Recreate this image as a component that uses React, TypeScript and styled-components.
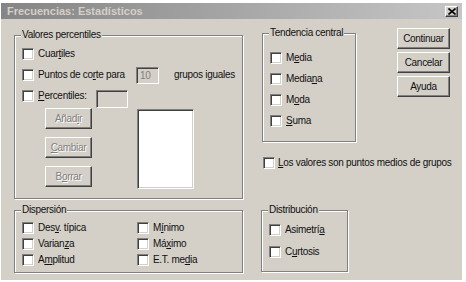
import styled, { createGlobalStyle } from 'styled-components';

const GlobalStyle = createGlobalStyle`
  html, body {
    margin: 0;
    padding: 0;
    background: #fff;
  }
  body {
    font-family: 'Liberation Sans', Arial, sans-serif;
  }
`;

const Window = styled.div`
  margin: 3px 0 0 1px;
  width: 461px;
  height: 277px;
  background: #d4d0c8;
  display: flex;
  flex-direction: column;
  font-size: 10px;
  line-height: 12px;
  letter-spacing: -0.3px;
  color: #111;
`;

const TitleBar = styled.div`
  flex: none;
  height: 16px;
  display: flex;
  align-items: center;
  justify-content: space-between;
  padding: 0 4px 0 6px;
  background: linear-gradient(to right, #858585, #c6c6c6);
`;

const Title = styled.span`
  font-size: 11px;
  font-weight: bold;
  letter-spacing: 0;
  color: #d4d0c8;
`;

const CloseButton = styled.div`
  box-sizing: border-box;
  width: 13px;
  height: 11px;
  display: flex;
  align-items: center;
  justify-content: center;
  background: #d4d0c8;
  border: 1px solid;
  border-color: #fff #404040 #404040 #fff;
  box-shadow: inset -1px -1px 0 #808080;
`;

const Body = styled.div`
  display: grid;
  grid-template-columns: 229px 1fr;
  column-gap: 19px;
  row-gap: 11px;
  padding-left: 13px;
`;

const Column = styled.div<{ $top?: number }>`
  display: flex;
  flex-direction: column;
  align-items: flex-start;
  margin-top: ${(p) => p.$top ?? 0}px;
`;

const GroupBox = styled.div<{ $w: number; $h: number; $top?: number; $left?: number }>`
  box-sizing: border-box;
  width: ${(p) => p.$w}px;
  height: ${(p) => p.$h}px;
  margin-top: ${(p) => p.$top ?? 0}px;
  margin-left: ${(p) => p.$left ?? 0}px;
  border: 1px solid #808080;
  box-shadow: 1px 1px 0 #fff, inset 1px 1px 0 #fff;
  padding: 0 6px;
  display: flex;
  flex-direction: column;
  align-items: flex-start;
`;

const Caption = styled.div`
  height: 12px;
  margin-top: -7px;
  padding: 0 1px;
  background: #d4d0c8;
`;

const CheckRow = styled.div<{ $top?: number; $h?: number; $gap?: number; $align?: string }>`
  display: flex;
  align-items: ${(p) => p.$align ?? 'center'};
  gap: ${(p) => p.$gap ?? 4}px;
  height: ${(p) => p.$h ?? 16}px;
  margin-top: ${(p) => p.$top ?? 0}px;
  padding-left: 1px;
  white-space: nowrap;
`;

const CheckBox = styled.span`
  box-sizing: border-box;
  flex: none;
  width: 12px;
  height: 12px;
  background: #fff;
  border: 1px solid;
  border-color: #808080 #fff #fff #808080;
  box-shadow: inset 1px 1px 0 #404040, inset -1px -1px 0 #d4d0c8;
`;

const Label = styled.span<{ $w?: number }>`
  display: inline-block;
  width: ${(p) => (p.$w ? `${p.$w}px` : 'auto')};
`;

const Field = styled.div<{ $w: number; $h: number; $white?: boolean }>`
  box-sizing: border-box;
  flex: none;
  width: ${(p) => p.$w}px;
  height: ${(p) => p.$h}px;
  padding: 2px 3px;
  background: ${(p) => (p.$white ? '#fff' : '#d4d0c8')};
  color: #808080;
  border: 1px solid;
  border-color: #808080 #fff #fff #808080;
  box-shadow: inset 1px 1px 0 #404040, inset -1px -1px 0 #d4d0c8;
`;

const Trailing = styled.span`
  margin-left: 11px;
`;

const ListArea = styled.div`
  display: flex;
  align-items: flex-start;
`;

const ButtonStack = styled.div<{ $left: number; $top: number; $gap: number }>`
  display: flex;
  flex-direction: column;
  gap: ${(p) => p.$gap}px;
  margin-left: ${(p) => p.$left}px;
  margin-top: ${(p) => p.$top}px;
`;

const Button = styled.button<{ $w: number }>`
  box-sizing: border-box;
  width: ${(p) => p.$w}px;
  height: 21px;
  padding: 0;
  font: inherit;
  letter-spacing: inherit;
  color: #111;
  background: #d4d0c8;
  border: 1px solid;
  border-color: #fff #404040 #404040 #fff;
  box-shadow: inset -1px -1px 0 #808080;

  &:disabled {
    color: #808080;
    text-shadow: 1px 1px 0 #fff;
  }
`;

const ListBox = styled(Field)`
  margin-left: 45px;
  margin-top: 1px;
`;

const TwoCols = styled.div`
  display: grid;
  grid-template-columns: 115px 1fr;
  grid-auto-rows: 16px;
  margin-top: 4px;
`;

const Stack = styled.div<{ $top: number; $gap: number }>`
  display: flex;
  flex-direction: column;
  gap: ${(p) => p.$gap}px;
  margin-top: ${(p) => p.$top}px;
`;

const TopRow = styled.div`
  display: flex;
  align-items: flex-start;
`;

const Check = ({ children, ...rest }: { children: React.ReactNode; $top?: number; $gap?: number }) => (
  <CheckRow {...rest}>
    <CheckBox />
    <Label>{children}</Label>
  </CheckRow>
);

export default function App() {
  return (
    <>
      <GlobalStyle />
      <Window>
        <TitleBar>
          <Title>Frecuencias: Estadísticos</Title>
          <CloseButton>
            <svg width="8" height="7" viewBox="0 0 8 7">
              <path d="M0.5 0.5 L7.5 6.5 M7.5 0.5 L0.5 6.5" stroke="#000" strokeWidth="1.6" />
            </svg>
          </CloseButton>
        </TitleBar>

        <Body>
          {/* left, top */}
          <Column $top={16}>
            <GroupBox $w={229} $h={164}>
              <Caption>Valores percentiles</Caption>
              <Check $top={5}>
                Cuar<u>t</u>iles
              </Check>
              <CheckRow $top={4} $h={18}>
                <CheckBox />
                <Label $w={94}>
                  Puntos de co<u>r</u>te para
                </Label>
                <Field $w={23} $h={17}>
                  10
                </Field>
                <Trailing>grupos iguales</Trailing>
              </CheckRow>
              <CheckRow $top={6} $h={18} $align="flex-start">
                <CheckBox />
                <Label $w={54}>
                  <u>P</u>ercentiles:
                </Label>
                <Field $w={32} $h={18} />
              </CheckRow>
              <ListArea>
                <ButtonStack $left={24} $top={0} $gap={8}>
                  <Button $w={47} disabled>
                    Añad<u>i</u>r
                  </Button>
                  <Button $w={47} disabled>
                    <u>C</u>ambiar
                  </Button>
                  <Button $w={47} disabled>
                    B<u>o</u>rrar
                  </Button>
                </ButtonStack>
                <ListBox $w={57} $h={80} $white />
              </ListArea>
            </GroupBox>
          </Column>

          {/* right, top */}
          <Column>
            <TopRow>
              <GroupBox $w={94} $h={109} $top={14}>
                <Caption>Tendencia central</Caption>
                <Stack $top={11} $gap={5}>
                  <Check>
                    M<u>e</u>dia
                  </Check>
                  <Check>
                    Media<u>n</u>a
                  </Check>
                  <Check>
                    M<u>o</u>da
                  </Check>
                  <Check>
                    <u>S</u>uma
                  </Check>
                </Stack>
              </GroupBox>
              <ButtonStack $left={41} $top={9} $gap={3}>
                <Button $w={53}>Continuar</Button>
                <Button $w={53}>Cancelar</Button>
                <Button $w={53}>Ayuda</Button>
              </ButtonStack>
            </TopRow>
            <Check $top={13} $gap={3}>
              <u>L</u>os valores son puntos medios de grupos
            </Check>
          </Column>

          {/* left, bottom */}
          <GroupBox $w={229} $h={63}>
            <Caption>Dispersión</Caption>
            <TwoCols>
              <Check>
                Des<u>v</u>. típica
              </Check>
              <Check>
                M<u>í</u>nimo
              </Check>
              <Check>
                Varian<u>z</u>a
              </Check>
              <Check>
                Má<u>x</u>imo
              </Check>
              <Check>
                A<u>m</u>plitud
              </Check>
              <Check>
                E.T. me<u>d</u>ia
              </Check>
            </TwoCols>
          </GroupBox>

          {/* right, bottom */}
          <GroupBox $w={87} $h={62} $left={-1}>
            <Caption>Distribución</Caption>
            <Stack $top={6} $gap={6}>
              <Check>
                Asimetrí<u>a</u>
              </Check>
              <Check>
                C<u>u</u>rtosis
              </Check>
            </Stack>
          </GroupBox>
        </Body>
      </Window>
    </>
  );
}
